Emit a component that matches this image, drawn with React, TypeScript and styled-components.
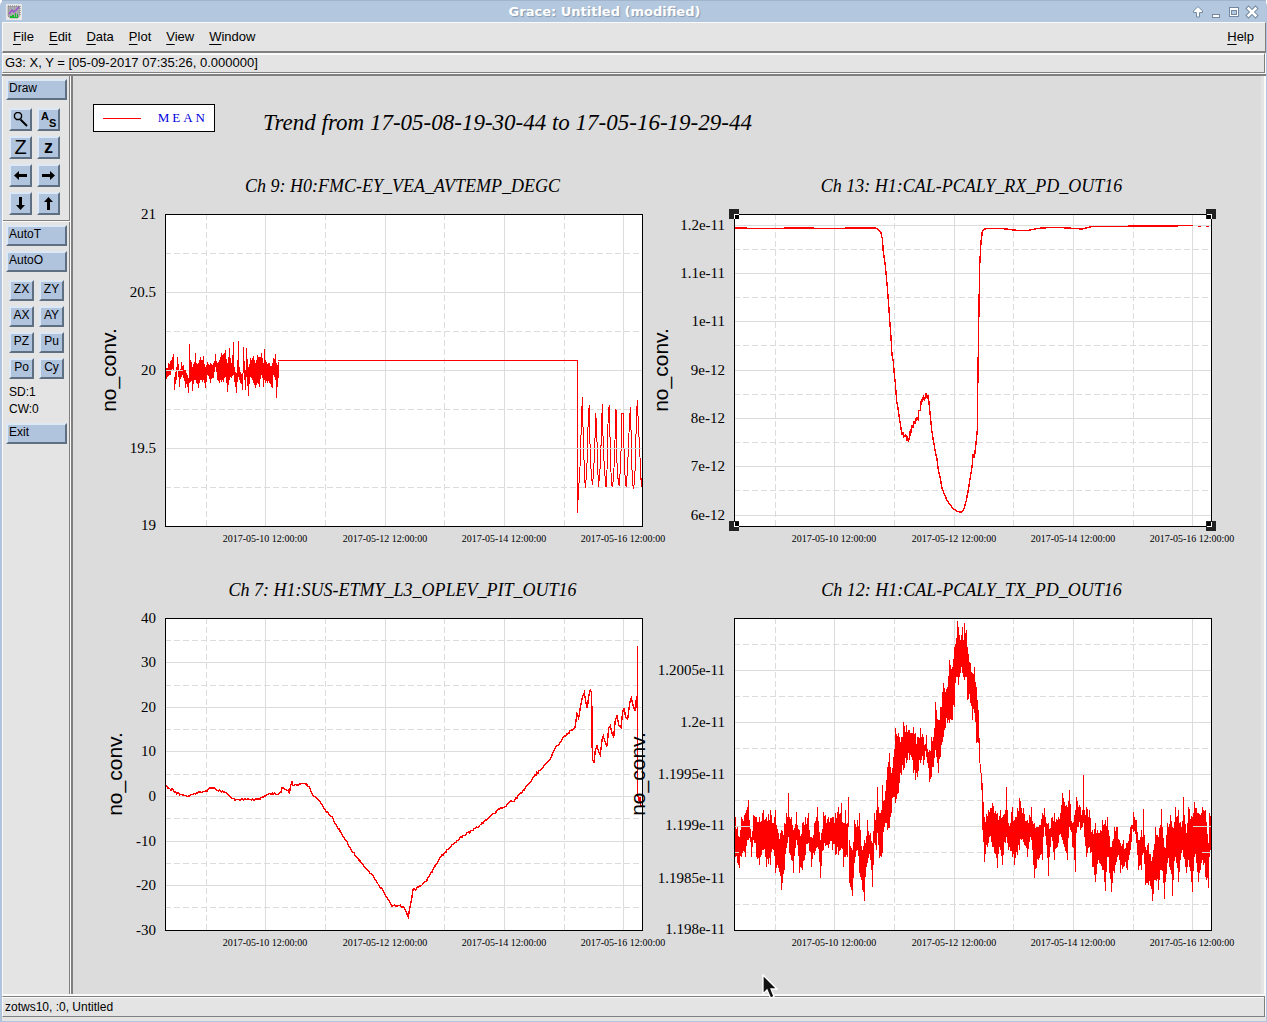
import React from "react";
import styled, { createGlobalStyle } from "styled-components";

const sans = '"Liberation Sans", Arial, sans-serif';
const serif = '"Liberation Serif", "Times New Roman", serif';

const color = {
  frame: "#b0c4de",
  panel: "#e4e4e4",
  canvas: "#dcdcdc",
  shade: "#808080",
  light: "#fafafa",
  trace: "#ff0000",
};

const GlobalStyle = createGlobalStyle`
  * { box-sizing: border-box; }
  body { margin: 0; background: #fff; }
`;

/* ---------- window chrome ---------- */

const Window = styled.div`
  min-height: 100vh;
  display: flex;
  flex-direction: column;
  padding: 0 1px 1px 2px;
  background: ${color.frame};
  border-radius: 6px 6px 0 0;
  font: 12px/16px ${sans};
  color: #000;
`;

const TitleBar = styled.header`
  height: 22px;
  display: flex;
  align-items: center;
  padding: 0 7px 0 4px;
  border-top: 1px solid #a0b4cc;
  background: #b3c8de;
`;

const WindowTitle = styled.h1`
  flex: 1;
  margin: 0;
  padding-right: 4px;
  text-align: center;
  font: bold 13px/20px "DejaVu Sans", sans-serif;
  color: #fff;
  text-shadow: 1px 1px 1px #8499b0;
`;

const WindowControls = styled.div`
  display: flex;
  gap: 4px;
`;

const ControlButton = styled.button`
  width: 14px;
  height: 14px;
  padding: 0;
  border: 0;
  background: none;
  svg { display: block; }
`;

const MenuBar = styled.nav`
  height: 31px;
  display: flex;
  align-items: center;
  gap: 15px;
  padding: 0 11px 0 10px;
  background: ${color.panel};
  border: solid ${color.light};
  border-width: 1px 1px 2px;
  border-right-color: ${color.shade};
  border-bottom-color: ${color.shade};
  font-size: 13px;
`;

const MenuButton = styled.button<{ $last?: boolean }>`
  padding: 0;
  border: 0;
  background: none;
  font: inherit;
  color: inherit;
  margin-left: ${(p) => (p.$last ? "auto" : "0")};
`;

const Mnemonic = styled.span`
  text-decoration: underline 1px;
  text-underline-offset: 3px;
`;

const StatusStrip = styled.div<{ $large?: boolean }>`
  height: ${(p) => (p.$large ? "20px" : "21px")};
  padding: 0 2px;
  background: ${color.panel};
  border: 1px solid ${color.shade};
  border-left-color: ${color.light};
  border-top-color: ${(p) => (p.$large ? color.light : color.shade)};
  box-shadow: inset 0 1px ${color.light};
  font-size: ${(p) => (p.$large ? "13px" : "12px")};
  line-height: ${(p) => (p.$large ? "17px" : "20px")};
`;

const LocatorRow = styled.div`
  padding: 0 1px 1px 0;
  background: ${color.light};
`;

const StatusRow = styled.div`
  padding: 2px 1px 4px 0;
  background: linear-gradient(${color.light} 80%, ${color.panel} 80%);
`;

const Workspace = styled.main`
  flex: 1;
  display: flex;
  border-top: 2px solid ${color.shade};
  background: ${color.panel};
`;

/* ---------- toolbar ---------- */

const Toolbar = styled.aside`
  width: 69px;
  flex: none;
  display: flex;
  flex-direction: column;
  border: solid ${color.light};
  border-width: 0 1px 0 1px;
  box-shadow: inset -1px 0 ${color.shade};
`;

const ToolGroup = styled.div<{ $ruled?: boolean }>`
  display: flex;
  flex-direction: column;
  gap: 5px;
  padding: ${(p) => (p.$ruled ? "3px 3px 5px" : "4px 3px")};
  border-bottom: ${(p) => (p.$ruled ? `1px solid ${color.shade}` : "0")};
  box-shadow: ${(p) => (p.$ruled ? `0 1px ${color.light}` : "none")};
`;

const ToolButton = styled.button`
  height: 21px;
  padding: 0 1px 2px;
  border: 2px solid;
  border-color: #dce8f5 #5f6f82 #5f6f82 #dce8f5;
  background: #b0c4de;
  font: inherit;
  color: inherit;
  text-align: left;
  line-height: 15px;
`;

const IconGrid = styled.div`
  display: grid;
  grid-template-columns: 23px 23px;
  gap: 5px;
  padding: 3px 3px 0;
`;

const IconButton = styled(ToolButton)<{ $size?: number; $bold?: boolean }>`
  height: 23px;
  padding: 0;
  display: flex;
  align-items: center;
  justify-content: center;
  font-size: ${(p) => p.$size ?? 12}px;
  font-weight: ${(p) => (p.$bold ? "bold" : "normal")};
`;

const ShortGrid = styled.div`
  display: grid;
  grid-template-columns: 25px 25px;
  gap: 5px;
  padding: 3px 3px 0;
`;

const ShortButton = styled(ToolButton)`
  text-align: center;
`;

const Readout = styled.div`
  padding: 0 3px;
  line-height: 17px;
`;

/* ---------- plot canvas ---------- */

const Canvas = styled.section`
  flex: 1;
  min-width: 0;
  padding: 0 30px 0 20px;
  margin-right: 5px;
  background: ${color.canvas};
  border-left: 2px solid ${color.shade};
  box-shadow: 3px 0 ${color.panel}, 5px 0 ${color.light};
  position: relative;
`;

const CanvasHeader = styled.div`
  height: 84px;
  display: flex;
  align-items: flex-start;
  gap: 48px;
  padding-top: 28px;
`;

const Legend = styled.div`
  width: 122px;
  height: 28px;
  display: flex;
  align-items: center;
  justify-content: space-between;
  padding: 0 6px 0 9px;
  border: 1px solid #000;
  background: #fff;
  font: 13px/20px ${serif};
  letter-spacing: 3px;
  color: #0000dd;
`;

const LegendLine = styled.span`
  width: 38px;
  height: 1px;
  background: ${color.trace};
`;

const PlotTitle = styled.h2`
  margin: 0;
  padding-top: 5px;
  font: italic 23px/28px ${serif};
`;

const ChartGrid = styled.div`
  display: grid;
  grid-template-columns: 1fr 1fr;
`;

const Figure = styled.figure`
  margin: 0;
  min-width: 0;
`;

const Caption = styled.figcaption`
  height: 40px;
  padding: 14px 0 0 50px;
  text-align: center;
  white-space: nowrap;
  font: italic 18px/24px ${serif};
`;

const ChartSvg = styled.svg`
  display: block;
  width: 100%;
  height: auto;
  overflow: visible;
`;

const TickText = styled.text`
  font: 15px ${serif};
  text-anchor: end;
`;

const TimeText = styled.text`
  font: 10px ${serif};
  text-anchor: middle;
`;

const AxisText = styled.text`
  font: 21px ${sans};
  text-anchor: middle;
`;

const Pointer = styled.svg`
  position: absolute;
  right: 483px;
  bottom: -6px;
  z-index: 1;
`;

/* ---------- data ---------- */

// Samples are flat number lists in thirds of a plot unit, shifted by an origin.
type Origin = [number, number];

const random = (seed: number) => () => {
  seed = (seed * 1664525 + 1013904223) % 4294967296;
  return seed / 4294967296;
};

function linePath(data: number[], [ox, oy]: Origin, rough = 0) {
  const rnd = random(7);
  const pts: string[] = [];
  for (let i = 0; i < data.length; i += 2) {
    const x = data[i] / 3 + ox;
    const y = data[i + 1] / 3 + oy;
    pts.push(`${x.toFixed(1)} ${y.toFixed(1)}`);
    if (rough && i + 2 < data.length) {
      const nx = data[i + 2] / 3 + ox;
      const ny = data[i + 3] / 3 + oy;
      for (let c = x + 1; c < nx - 1; c += 1) {
        const t = (c - x) / (nx - x);
        const v = y + (ny - y) * t + (rnd() - 0.5) * rough;
        pts.push(`${c.toFixed(1)} ${v.toFixed(1)}`);
      }
    }
  }
  return "M" + pts.join("L");
}

// Triples of x, top and bottom become one vertical stroke for each column.
function bandPath(data: number[], [ox, oy]: Origin, inset: number) {
  const rnd = random(19);
  let d = "";
  for (let i = 0; i + 5 < data.length; i += 3) {
    const x0 = Math.round(data[i] / 3 + ox);
    const x1 = Math.round(data[i + 3] / 3 + ox);
    for (let x = x0; x < x1; x++) {
      const t = (x - x0) / (x1 - x0);
      const shrink = x === x0 ? 0 : inset;
      const top = (data[i + 1] + (data[i + 4] - data[i + 1]) * t) / 3 + oy + rnd() * shrink;
      const low = (data[i + 2] + (data[i + 5] - data[i + 2]) * t) / 3 + oy - rnd() * shrink;
      d += `M${x + 0.5} ${Math.round(top)}V${Math.max(Math.round(low), Math.round(top) + 3)}`;
    }
  }
  return d;
}

const tempNoise = [
  18,145,178, 24,130,168, 30,122,165, 40,102,150, 43,170,210, 48,140,180, 52,112,150, 57,150,202,
  62,126,170, 70,135,175, 74,150,203, 80,165,200, 85,175,218, 88,72,190, 91,120,185, 95,115,190,
  97,140,213, 101,125,180, 105,100,180, 109,130,190, 113,130,203, 120,110,180, 128,125,200,
  130,108,180, 135,140,205, 142,125,165, 150,130,190, 158,128,175, 165,102,140, 172,130,180,
  178,120,190, 182,98,185, 190,102,185, 196,90,170, 200,130,215, 204,110,195, 208,84,180,
  214,130,175, 220,66,165, 223,140,185, 229,160,218, 235,62,170, 238,140,180, 245,160,210,
  250,80,160, 254,150,210, 259,84,170, 265,140,227, 270,115,170, 280,108,190, 286,130,205,
  291,105,190, 298,112,200, 304,98,165, 310,130,200, 313,88,180, 316,120,190, 327,128,190,
  335,130,205, 340,115,165, 345,102,180, 349,130,233, 353,125,175, 356,121,150,
];

const tempLine = [
  -846,62, 52,62, 52,520, 55,466, 60,380, 62,312, 67,172, 68,225, 71,335, 74,410, 76,445, 79,410,
  82,350, 85,226, 88,196, 91,362, 95,410, 97,436, 100,410, 104,330, 107,220, 109,245, 113,365,
  115,442, 119,405, 122,348, 127,192, 130,325, 134,398, 138,442, 141,390, 145,210, 148,196,
  150,290, 154,428, 157,442, 161,410, 165,300, 168,208, 171,370, 175,428, 178,437, 182,370,
  186,220, 189,220, 192,325, 196,428, 199,442, 203,375, 207,278, 211,202, 214,298, 217,430,
  221,448, 226,380, 229,240, 232,181, 235,248, 240,352, 244,440, 246,415,
];

const rxLine = [
  43,84, 100,85, 170,85, 240,84, 300,85, 360,85, 410,84, 465,84, 475,88, 482,96, 487,116, 490,155,
  495,190, 499,228, 502,262, 505,300, 509,360, 513,412, 516,465, 520,485, 523,522, 526,550,
  530,605, 535,630, 539,660, 543,685, 547,706, 549,698, 552,710, 557,704, 560,718, 563,712,
  565,725, 569,712, 571,690, 574,694, 577,674, 580,684, 583,662, 586,672, 589,654, 594,658,
  596,632, 601,632, 604,600, 608,604, 610,588, 614,598, 619,578, 622,594, 625,586, 630,640,
  635,690, 640,720, 645,750, 651,778, 655,810, 660,830, 666,865, 674,885, 682,903, 690,914,
  700,926, 712,934, 724,937, 730,932, 738,905, 745,870, 751,832, 757,795, 759,762, 763,775,
  768,730, 772,690, 773,575, 776,370, 779,195, 783,125, 787,95, 795,87, 810,85, 850,86, 890,91,
  925,91, 955,85, 1000,82, 1060,85, 1085,87, 1115,80, 1190,79, 1295,78, 1418,77,
];

const rxTail = [1434,79, 1443,79];
const rxTailEnd = [1458,79, 1467,79];

const pitLine = [
  47,526, 60,537, 70,540, 80,551, 95,553, 112,559, 130,552, 150,546, 165,545, 175,538, 186,533,
  200,541, 222,546, 235,553, 245,565, 260,569, 285,567, 305,571, 325,567, 345,558, 358,550,
  385,552, 393,546, 396,533, 405,539, 417,540, 418,552, 422,526, 426,515, 428,526, 440,525,
  455,521, 470,523, 480,536, 490,557, 510,575, 527,602, 545,620, 562,651, 583,682, 600,713,
  620,741, 640,765, 660,791, 668,796, 682,820, 700,843, 710,862, 726,888, 745,886, 760,890,
  768,905, 775,921, 779,895, 785,868, 789,838, 797,840, 802,830, 815,826, 828,814, 840,795,
  855,768, 870,743, 885,727, 900,713, 915,697, 930,684, 950,670, 970,660, 990,645, 1010,630,
  1030,610, 1050,597, 1065,590, 1080,574, 1092,574, 1105,556, 1120,541, 1135,524, 1155,495,
  1175,477, 1190,457, 1202,445, 1215,415, 1230,398, 1245,378, 1265,360, 1275,353,
];

const pitTail = [
  1275,353, 1281,312, 1286,325, 1291,292, 1297,262, 1303,248, 1308,280, 1312,294, 1316,258,
  1321,240, 1325,250, 1327,445, 1332,458, 1336,420, 1341,408, 1346,425, 1351,434, 1356,390,
  1360,378, 1365,395, 1371,409, 1376,355, 1381,348, 1386,370, 1391,381, 1396,330, 1401,318,
  1406,345, 1413,352, 1418,305, 1422,296, 1427,320, 1433,327, 1439,280, 1444,263, 1449,285,
  1455,302, 1460,258, 1462,300, 1463,108, 1463,556, 1468,575, 1470,560, 1473,590, 1476,590,
];

const txNoise = [
  45,620,740, 51,650,758, 57,680,775, 62,620,740, 75,610,740, 85,570,690, 92,680,740, 100,615,690,
  108,620,742, 118,620,765, 130,600,720, 138,620,770, 150,600,765, 160,640,720, 166,600,790,
  175,670,775, 184,660,840, 192,640,780, 198,610,715, 202,620,700, 205,550,680, 208,620,730,
  212,620,750, 218,660,790, 227,605,690, 238,660,790, 245,640,780, 255,620,735, 265,610,700,
  273,680,770, 282,640,735, 290,590,710, 301,690,805, 310,605,720, 325,620,715, 335,620,720,
  345,610,735, 355,590,735, 363,580,715, 370,640,770, 376,600,740, 380,640,740, 384,560,650,
  388,690,820, 395,720,858, 403,630,760, 410,630,720, 418,610,790, 427,720,840, 431,690,873,
  435,700,800, 442,630,760, 450,670,750, 457,700,830, 461,610,700, 469,600,720, 472,530,670,
  476,610,745, 484,600,740, 487,525,730, 493,570,650, 500,470,660, 508,430,655, 514,490,610,
  520,440,560, 526,355,580, 535,370,550, 543,380,495, 550,335,480, 558,345,460, 567,360,450,
  574,370,440, 580,350,490, 585,370,510, 592,380,500, 601,355,460, 610,380,465, 618,375,440,
  626,420,515, 633,380,500, 640,380,470, 646,275,420, 655,330,490, 661,290,440, 670,220,380,
  680,230,340, 688,150,340, 695,170,330, 703,110,290, 709,85,200, 712,33,200, 715,50,225,
  720,90,190, 725,50,190, 728,90,200, 731,38,210, 737,60,200, 741,110,270, 750,160,280,
  757,190,330, 763,170,310, 769,230,400, 774,300,400, 778,385,460, 782,490,540, 786,520,660,
  791,590,755, 793,620,755,
];

const txLate = [
  853,620,755, 865,600,700, 877,580,710, 890,610,775, 900,600,720, 907,620,765,
  915,600,700, 917,530,680, 920,600,700, 925,640,720, 937,590,740, 943,630,765, 958,565,720,
  970,595,695, 982,630,740, 994,590,690, 1003,640,805, 1015,650,750, 1025,610,750, 1032,595,650,
  1045,640,798, 1052,625,680, 1062,610,750, 1075,620,700, 1087,550,690, 1100,590,750, 1108,540,650,
  1117,640,710, 1124,600,785, 1127,560,670, 1140,590,660, 1147,600,650, 1150,496,640, 1153,600,680,
  1157,590,740, 1167,600,710, 1175,660,770, 1186,640,815, 1196,670,760, 1205,630,780, 1215,630,843,
  1222,620,740, 1234,710,847, 1241,650,790, 1250,650,740, 1260,700,790, 1270,690,770, 1280,700,780,
  1290,650,720, 1298,605,665, 1307,630,700, 1315,690,780, 1323,660,780, 1328,660,720, 1330,598,730,
  1335,710,825, 1345,700,825, 1355,740,873, 1365,650,810, 1373,680,840, 1384,597,780, 1393,710,867,
  1402,640,760, 1410,615,780, 1417,650,858, 1425,590,740, 1435,600,815, 1443,650,730, 1450,562,740,
  1458,670,790, 1465,590,750, 1475,620,845, 1482,575,740, 1495,610,815, 1505,590,750, 1515,600,800,
  1523,700,835, 1528,610,740, 1533,620,735,
];

type Tick = [string, number];

interface ChartProps {
  title: string;
  axisX: number;
  ticks: Tick[];
  major: number[];
  minor: number[];
  lines: string[];
  weight?: number;
  overlay?: string;
  selected?: boolean;
}

const charts: ChartProps[] = [
  {
    title: "Ch 9: H0:FMC-EY_VEA_AVTEMP_DEGC",
    axisX: 23,
    ticks: [["21", 0], ["20.5", 78], ["20", 156], ["19.5", 234], ["19", 311]],
    major: [78, 156, 234],
    minor: [39, 117, 195, 273],
    lines: [bandPath(tempNoise, [-5, 106], 3), linePath(tempLine, [395, 126])],
    overlay: "M1 156.5H18M412 234.5H477",
  },
  {
    title: "Ch 13: H1:CAL-PCALY_RX_PD_OUT16",
    axisX: 6,
    ticks: [["1.2e-11", 11], ["1.1e-11", 59], ["1e-11", 107], ["9e-12", 156], ["8e-12", 204], ["7e-12", 252], ["6e-12", 301]],
    major: [11, 59, 107, 156, 204, 252, 301],
    minor: [35, 83, 131, 180, 228, 276],
    lines: [
      linePath(rxLine, [-14, -14]),
      linePath(rxTail, [-14, -14]),
      linePath(rxTailEnd, [-14, -14]),
    ],
    weight: 1.4,
    selected: true,
  },
  {
    title: "Ch 7: H1:SUS-ETMY_L3_OPLEV_PIT_OUT16",
    axisX: 29,
    ticks: [["40", 0], ["30", 44], ["20", 89], ["10", 133], ["0", 178], ["-10", 223], ["-20", 267], ["-30", 312]],
    major: [44, 89, 133, 178, 223, 267],
    minor: [22, 67, 111, 156, 200, 245, 289],
    lines: [linePath(pitLine, [-15, -8], 2), linePath(pitTail, [-15, -8])],
    weight: 1.4,
  },
  {
    title: "Ch 12: H1:CAL-PCALY_TX_PD_OUT16",
    axisX: -17,
    ticks: [["1.2005e-11", 52], ["1.2e-11", 104], ["1.1995e-11", 156], ["1.199e-11", 207], ["1.1985e-11", 260], ["1.198e-11", 311]],
    major: [52, 104, 156, 208, 260],
    minor: [26, 78, 130, 182, 234, 286],
    lines: [bandPath(txNoise, [-14, -8], 9), bandPath(txLate, [-34, -8], 9)],
    overlay: "M1 208.5H18M1 234.5H5M459 208.5H477M468 234.5H477",
  },
];

const days: Tick[] = [
  ["2017-05-10 12:00:00", 100],
  ["2017-05-12 12:00:00", 220],
  ["2017-05-14 12:00:00", 339],
  ["2017-05-16 12:00:00", 458],
];
const halfDays = [41, 160, 279, 399];

const Handle = ({ x, y, left, top }: { x: number; y: number; left: boolean; top: boolean }) => {
  const ix = left ? x : x - 4;
  const iy = top ? y : y - 4;
  return (
    <g>
      <rect x={x - 5} y={y - 5} width={10} height={10} fill="#222" />
      <rect x={ix} y={iy} width={5} height={5} fill="#000" />
      <rect x={ix} y={y} width={5} height={1} fill="#fff" />
      <rect x={x} y={iy} width={1} height={5} fill="#fff" />
    </g>
  );
};

function Chart({ title, axisX, ticks, major, minor, lines, weight = 1, overlay, selected }: ChartProps) {
  const verticals = days.map(([, x]) => `M${x + 0.5} 0V312`).join("");
  const horizontals = major.map((y) => `M0 ${y + 0.5}H477`).join("");
  const dashedV = halfDays.map((x) => `M${x + 0.5} 0V312`).join("");
  const dashedH = minor.map((y) => `M0 ${y + 0.5}H477`).join("");
  return (
    <Figure>
      <Caption>{title}</Caption>
      <ChartSvg viewBox="0 0 569 364" role="img" aria-label={title}>
        <g transform="translate(72 14)">
          <g shapeRendering="crispEdges" fill="none">
            <rect width={478} height={313} fill="#fff" />
            <path d={dashedV + dashedH} stroke="#dcdcdc" strokeDasharray="6 3" />
            <path d={verticals + horizontals} stroke="#dcdcdc" />
            {lines.map((d, i) => (
              <path key={i} d={d} stroke={color.trace} strokeWidth={weight} />
            ))}
            {overlay && <path d={overlay} stroke="#dcdcdc" />}
            <rect x={0.5} y={0.5} width={477} height={312} stroke="#000" />
            {selected && (
              <>
                <Handle x={0} y={0} left top />
                <Handle x={477} y={0} left={false} top />
                <Handle x={0} y={312} left top={false} />
                <Handle x={477} y={312} left={false} top={false} />
              </>
            )}
          </g>
          {ticks.map(([label, y]) => (
            <TickText key={label} x={-9} y={y + 5}>{label}</TickText>
          ))}
          {days.map(([label, x]) => (
            <TimeText key={label} x={x} y={328}>{label}</TimeText>
          ))}
        </g>
        <AxisText transform={`translate(${axisX} 170) rotate(-90)`}>no_conv.</AxisText>
      </ChartSvg>
    </Figure>
  );
}

/* ---------- icons ---------- */

const AppIcon = () => (
  <svg width="16" height="16" viewBox="0 0 16 16" aria-hidden="true">
    <rect width="16" height="16" fill="#e8e8e8" />
    <path d="M2 2h12v9l-2 3H4l-2-2z" fill="#a9a9ad" stroke="#777" strokeDasharray="1 1" />
    <path d="M3 10l3-4 2 2 5-5" stroke="#9b4fd0" strokeWidth="1.4" fill="none" />
    <path d="M4 14v-2h2v-1h2v2h1v-4h1v4h1v-3h1v4z" fill="#14b82a" />
  </svg>
);

const controlShapes: [string, React.ReactNode][] = [
  ["Shade", <path key="s" d="M7 1.5l4.5 4.5v1.5H8.500V12h-3V7.500H2.500V6z" fill="#fff" stroke="#7288a0" />],
  ["Minimize", <rect key="m" x="3.500" y="9.500" width="7" height="3" fill="#fff" stroke="#7288a0" />],
  ["Maximize", (
    <g key="x" fill="none">
      <rect x="2.500" y="2.500" width="9" height="9" fill="#fff" stroke="#7288a0" />
      <rect x="4.500" y="5.500" width="5" height="4" fill="#b3c8de" stroke="#7288a0" />
    </g>
  )],
  ["Close", (
    <g key="c" fill="none" strokeLinecap="square">
      <path d="M3.500 3.500l7 7M10.500 3.500l-7 7" stroke="#7288a0" strokeWidth="4.500" />
      <path d="M3.500 3.500l7 7M10.500 3.500l-7 7" stroke="#fff" strokeWidth="2.500" />
    </g>
  )],
];

const Magnifier = () => (
  <svg width="15" height="15" viewBox="0 0 15 15" fill="none" stroke="#000" aria-hidden="true">
    <path d="M3.500.5h3l2 2v3l-2 2h-3l-2-2v-3z" strokeWidth="1.300" />
    <path d="M7.500 7.500l6.500 6.500" strokeWidth="2" />
  </svg>
);

const AutoScale = () => (
  <svg width="18" height="18" viewBox="0 0 18 18" aria-hidden="true">
    <text x="1" y="9" fontFamily="Liberation Sans, sans-serif" fontWeight="bold" fontSize="11">A</text>
    <text x="9" y="16" fontFamily="Liberation Sans, sans-serif" fontWeight="bold" fontSize="11">S</text>
  </svg>
);

const Arrow = ({ turn }: { turn: number }) => (
  <svg width="15" height="15" viewBox="0 0 15 15" aria-hidden="true">
    <path transform={`rotate(${turn} 7.500 7.500)`} d="M1 7.500L6 3v3h8v3H6v3z" fill="#000" />
  </svg>
);

const menus = ["File", "Edit", "Data", "Plot", "View", "Window", "Help"];
const shortcuts = ["ZX", "ZY", "AX", "AY", "PZ", "Pu", "Po", "Cy"];

export default function App() {
  return (
    <>
      <GlobalStyle />
      <Window>
        <TitleBar>
          <AppIcon />
          <WindowTitle>Grace: Untitled (modified)</WindowTitle>
          <WindowControls>
            {controlShapes.map(([label, shape]) => (
              <ControlButton key={label} aria-label={label}>
                <svg width="14" height="14" viewBox="0 0 14 14">{shape}</svg>
              </ControlButton>
            ))}
          </WindowControls>
        </TitleBar>
        <MenuBar>
          {menus.map((name) => (
            <MenuButton key={name} $last={name === "Help"}>
              <Mnemonic>{name[0]}</Mnemonic>{name.slice(1)}
            </MenuButton>
          ))}
        </MenuBar>
        <LocatorRow>
          <StatusStrip $large>G3: X, Y = [05-09-2017 07:35:26, 0.000000]</StatusStrip>
        </LocatorRow>
        <Workspace>
          <Toolbar>
            <ToolGroup $ruled>
              <ToolButton>Draw</ToolButton>
              <IconGrid>
                <IconButton aria-label="Zoom"><Magnifier /></IconButton>
                <IconButton aria-label="Autoscale"><AutoScale /></IconButton>
                <IconButton $size={20}>Z</IconButton>
                <IconButton $size={18} $bold>z</IconButton>
                <IconButton aria-label="Scroll left"><Arrow turn={0} /></IconButton>
                <IconButton aria-label="Scroll right"><Arrow turn={180} /></IconButton>
                <IconButton aria-label="Scroll down"><Arrow turn={270} /></IconButton>
                <IconButton aria-label="Scroll up"><Arrow turn={90} /></IconButton>
              </IconGrid>
            </ToolGroup>
            <ToolGroup>
              <ToolButton>AutoT</ToolButton>
              <ToolButton>AutoO</ToolButton>
              <ShortGrid>
                {shortcuts.map((name) => (
                  <ShortButton key={name}>{name}</ShortButton>
                ))}
              </ShortGrid>
              <Readout>
                <div>SD:1</div>
                <div>CW:0</div>
              </Readout>
              <ToolButton>Exit</ToolButton>
            </ToolGroup>
          </Toolbar>
          <Canvas>
            <CanvasHeader>
              <Legend><LegendLine />MEAN</Legend>
              <PlotTitle>Trend from 17-05-08-19-30-44 to 17-05-16-19-29-44</PlotTitle>
            </CanvasHeader>
            <ChartGrid>
              {charts.map((chart) => (
                <Chart key={chart.title} {...chart} />
              ))}
            </ChartGrid>
            <Pointer width="16" height="26" viewBox="0 0 16 26" aria-hidden="true">
              <path d="M1 1v19l4-4 3.500 8 3.500-1.500L9 15h6z" fill="#111" stroke="#fff" strokeWidth="1.300" />
            </Pointer>
          </Canvas>
        </Workspace>
        <StatusRow>
          <StatusStrip>zotws10, :0, Untitled</StatusStrip>
        </StatusRow>
      </Window>
    </>
  );
}
